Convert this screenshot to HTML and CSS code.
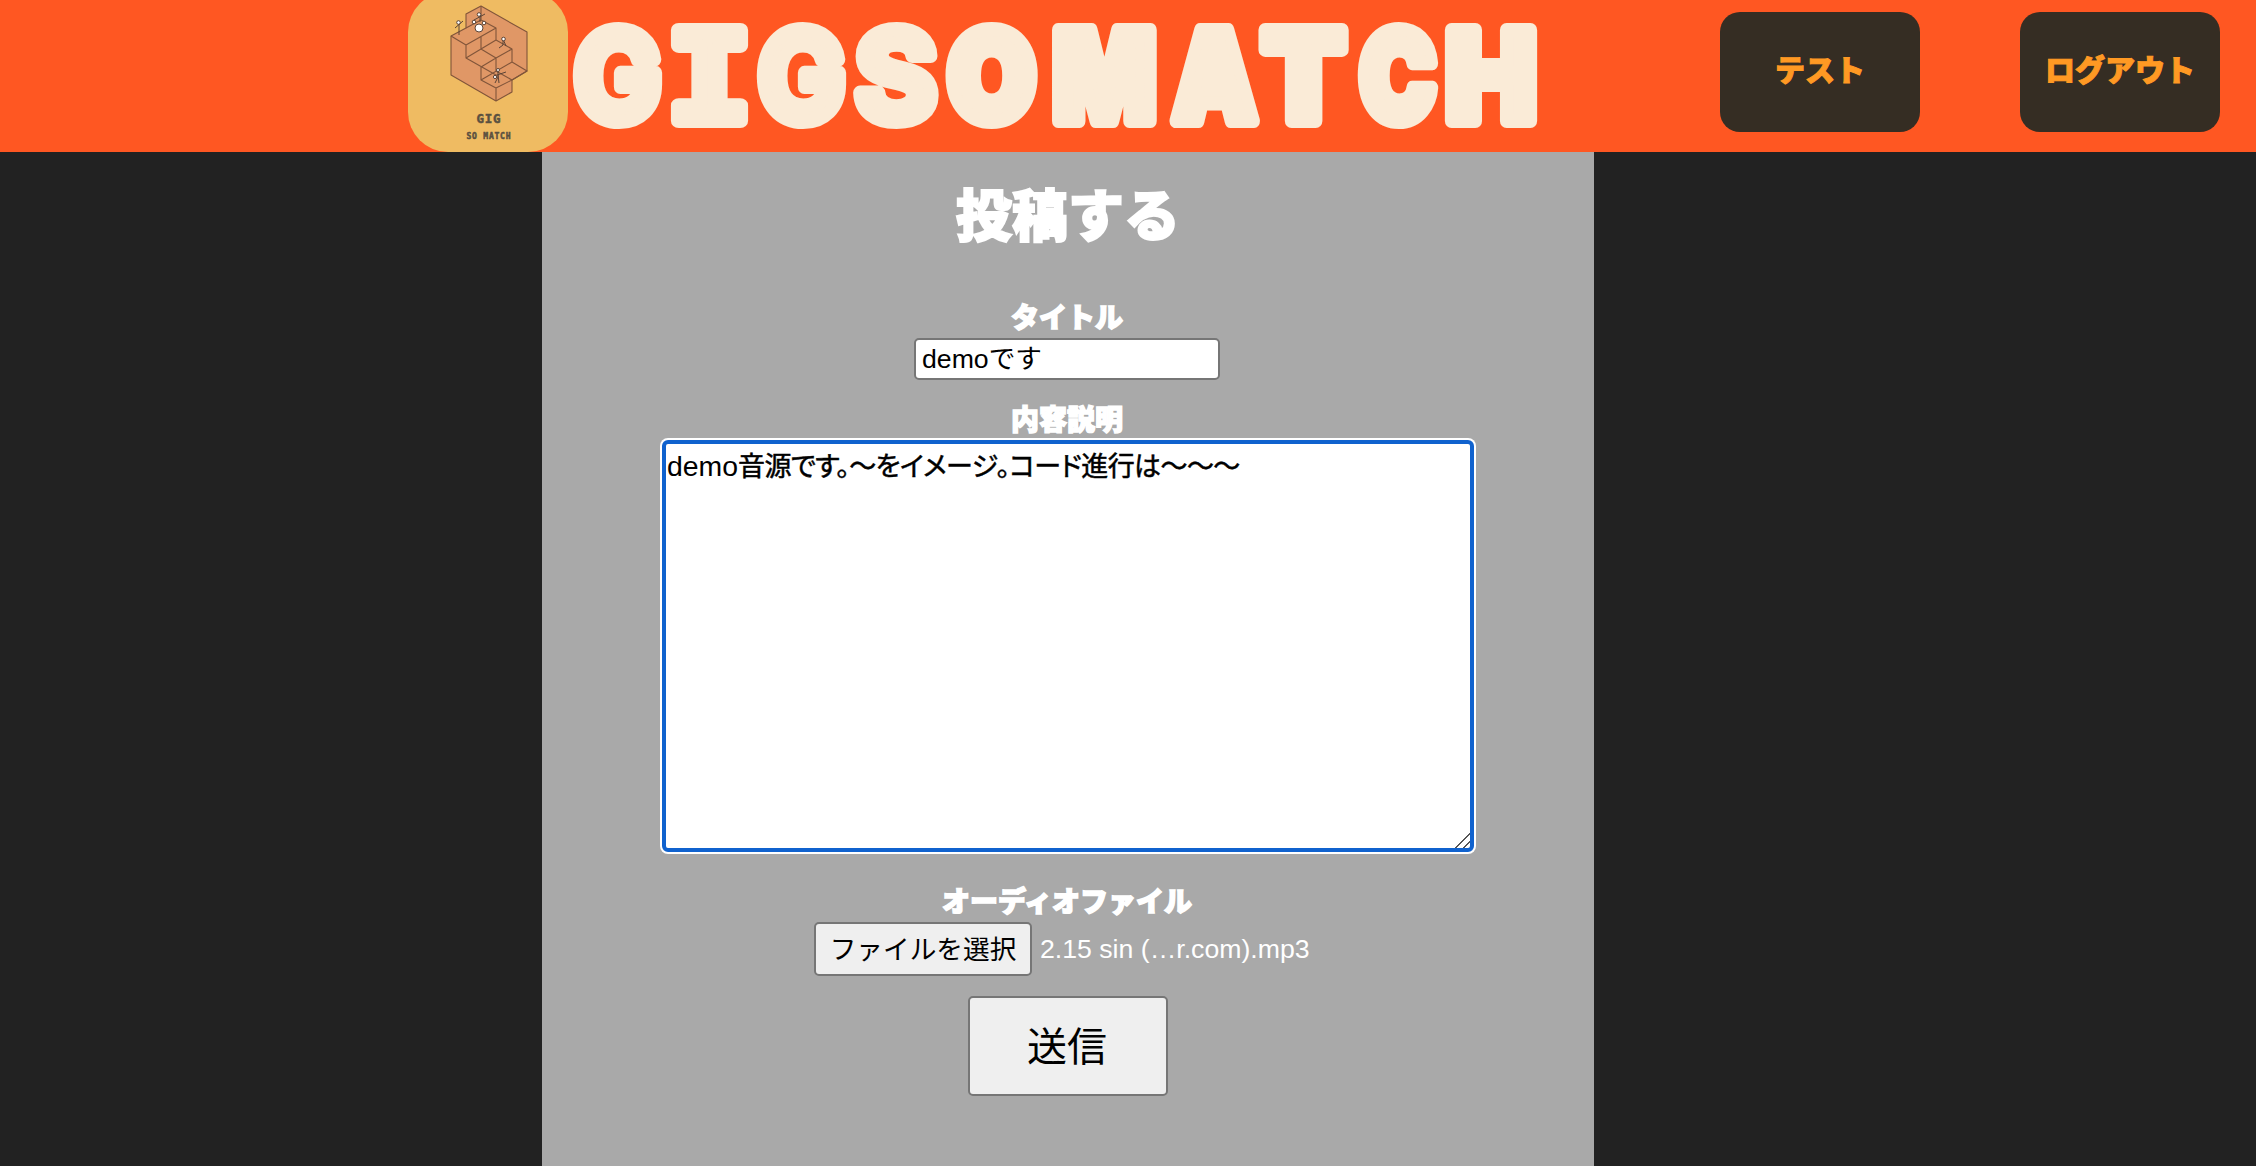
FILE: index.html
```html
<!DOCTYPE html>
<html lang="ja">
<head>
<meta charset="utf-8">
<title>GIGSOMATCH</title>
<link rel="stylesheet" href="styles.css">
</head>
<body>
<header class="header">
  <svg class="logo" viewBox="0 0 160 160" aria-label="GIG SO MATCH">
    <rect width="160" height="160" rx="40" fill="#efbb62"/>
    <g fill="#e09766" stroke="#80553a" stroke-width="1.1" stroke-linejoin="round">
      <path d="M58 22 73 14 119 40V79L104 88V100L88 109 43 83V44L58 36Z"/>
      <path fill="none" d="M43 44 58 53 88 36 73 28 58 36M73 14V28M58 53V66L88 83M58 66 73 57 88 66 73 75V88L88 96V109M73 44V57L88 48V36M88 48 104 57V70L119 79 104 88 88 96M104 57 88 66V79M73 88 104 70M88 79 104 88"/>
    </g>
    <g stroke="#5b4437" stroke-width="1" fill="#fff">
      <path fill="none" d="M51 32V43M47 36 55 29M72 22V30M66 28 77 22M95 47V53L91 56M95 47 98 54M90 79V85L87 91M90 83 91 91M86 84 98 80"/>
      <circle cx="50.500" cy="30.500" r="1.800"/><circle cx="71" cy="22.500" r="1.800"/>
      <circle cx="66" cy="30" r="1.800"/><circle cx="76" cy="31" r="1.800"/><circle cx="71" cy="36" r="4"/>
      <circle cx="95.500" cy="47" r="1.800"/><circle cx="90" cy="78" r="1.500"/><circle cx="87" cy="85" r="1.600"/>
    </g>
    <text class="logo-gig" x="68.500" y="131" textLength="24">GIG</text>
    <text class="logo-sub" x="58.500" y="146.500" textLength="44">SO MATCH</text>
  </svg>
  <svg class="brand" viewBox="0 0 980 152" aria-label="GIGSOMATCH">
    <text class="open" transform="translate(6 121) scale(.93 1)">G</text>
    <text class="slab" transform="translate(99 121) scale(1.13 1)">I</text>
    <text class="open" transform="translate(190 121) scale(.93 1)">G</text>
    <text class="open" transform="translate(287 121) scale(1 1)">S</text>
    <text transform="translate(380 121) scale(.9 1)">O</text>
    <text transform="translate(485 121) scale(.86 1)">M</text>
    <text transform="translate(605 121) scale(.84 1)">A</text>
    <text transform="translate(694 121) scale(.97 1)">T</text>
    <text transform="translate(792 121) scale(.81 1)">C</text>
    <text transform="translate(878 121) scale(.96 1)">H</text>
  </svg>
  <nav class="nav">
    <a class="nav-button">テスト</a>
    <a class="nav-button">ログアウト</a>
  </nav>
</header>
<main class="panel">
  <h1 class="heading">投稿する</h1>
  <form class="form">
    <label class="label" for="title">タイトル</label>
    <input class="title-input" id="title" value="demoです">
    <span class="label label-body" id="body-label">内容説明</span>
    <div class="body-input" role="textbox" aria-multiline="true" aria-labelledby="body-label" contenteditable="true" spellcheck="false">demo<span class="body-ja">音源です。〜をイメージ。コード進行は〜〜〜</span></div>
    <span class="label label-file">オーディオファイル</span>
    <div class="file-row">
      <button class="file-button" type="button">ファイルを選択</button>
      <span class="file-name">2.15 sin (…r.com).mp3</span>
    </div>
    <button class="submit" type="button">送信</button>
  </form>
</main>
</body>
</html>
```
FILE: styles.css
```css
* { box-sizing: border-box; }
body {
  margin: 0;
  height: 1166px;
  overflow: hidden;
  background: #222;
  font-family: "Liberation Sans", "Noto Sans CJK JP", sans-serif;
}
.header {
  display: flex;
  height: 152px;
  padding-left: 408px;
  background: #ff5722;
}
.logo { flex: none; width: 160px; height: 160px; margin-top: -8px; }
.logo text {
  font-family: "DejaVu Sans Mono", monospace;
  font-weight: 700;
  fill: #5a5040;
  stroke: #5a5040;
  stroke-width: .5px;
}
.logo-gig { font-size: 12.5px; }
.logo-sub { font-size: 8px; }
.brand { flex: none; width: 980px; height: 152px; }
.brand text {
  font-family: Inter, sans-serif;
  font-weight: 900;
  font-size: 125px;
  fill: #faebd7;
  stroke: #faebd7;
  stroke-width: 14px;
  stroke-linejoin: round;
}
.brand .open { font-weight: 700; }
.brand .slab { font-family: "DejaVu Sans Mono", monospace; font-weight: 700; }
.nav { display: flex; gap: 100px; margin-left: 172px; padding-top: 12px; }
.nav-button {
  display: flex;
  align-items: center;
  justify-content: center;
  width: 200px;
  height: 120px;
  padding-bottom: 8px;
  border-radius: 20px;
  background: #352d23;
  color: #ff9923;
  font: 900 30px "Noto Sans CJK JP", sans-serif;
  -webkit-text-stroke: 1px #ff9923;
}
.panel {
  width: 1052px;
  height: 1014px;
  margin-left: 542px;
  padding-top: 28px;
  background: #a9a9a9;
  color: #fff;
}
.heading {
  margin: 0;
  height: 64px;
  text-align: center;
  font: 900 56px/64px "Noto Sans CJK JP", sans-serif;
  -webkit-text-stroke: 2px #fff;
}
.form { display: flex; flex-direction: column; align-items: center; padding-top: 52px; }
.label {
  height: 42px;
  padding-right: 2px;
  font: 900 28px/40px "Noto Sans CJK JP", sans-serif;
  -webkit-text-stroke: 1.5px #fff;
}
.title-input {
  width: 306px;
  height: 42px;
  margin-right: 2px;
  padding: 0 6px 5px;
  border: 2px solid #767676;
  border-radius: 5px;
  background: #fff;
  font: 26.67px "Liberation Sans", "Noto Sans CJK JP", sans-serif;
}
.label-body { margin-top: 18px; }
.body-input {
  width: 812px;
  height: 412px;
  padding: 2px 1px;
  border: 4px solid #1062ce;
  border-radius: 6px;
  box-shadow: 0 0 0 2px #fff;
  outline: none;
  overflow: hidden;
  resize: both;
  background: #fff;
  color: #000;
  font: 28.4px/40px "Liberation Sans", "Noto Sans CJK JP", sans-serif;
}
.body-ja {
  font-size: 27px;
  font-feature-settings: "palt";
  letter-spacing: -.6px;
  -webkit-text-stroke: .5px #000;
}
.body-input::-webkit-resizer {
  background: linear-gradient(135deg, transparent 49%, #555 49% 55%, transparent 55% 76%, #555 76% 82%, transparent 82%);
}
.label-file { margin-top: 28px; }
.file-row { display: flex; align-items: center; width: 508px; height: 54px; gap: 8px; }
.file-button, .submit {
  padding: 0 0 4px;
  border: 2px solid #767676;
  border-radius: 5px;
  background: #efefef;
  color: #000;
  font: 26.67px "Noto Sans CJK JP", sans-serif;
}
.file-button { width: 218px; height: 54px; }
.file-name { font-size: 26.67px; }
.submit { width: 200px; height: 100px; margin-top: 20px; padding-right: 2px; font-size: 40px; }
```
